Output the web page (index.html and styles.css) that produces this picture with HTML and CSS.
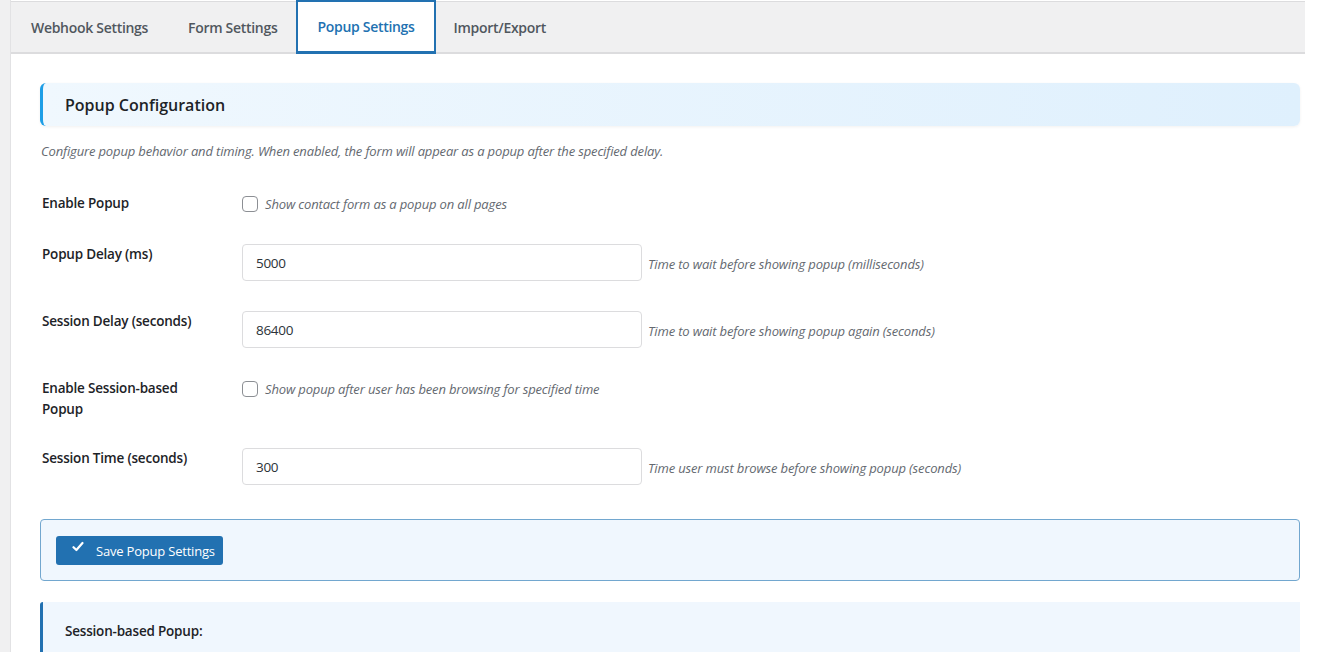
FILE: index.html
```html
<!DOCTYPE html>
<html lang="en">
<head>
<meta charset="utf-8">
<title>Popup Settings</title>
<link rel="stylesheet" href="styles.css">
</head>
<body>
<div class="page">
  <div class="edge"></div>
  <main class="main">
    <nav class="tabs">
      <a class="tab">Webhook Settings</a>
      <a class="tab">Form Settings</a>
      <a class="tab active">Popup Settings</a>
      <a class="tab">Import/Export</a>
    </nav>
    <div class="content">
      <div class="section-head">
        <h2>Popup Configuration</h2>
      </div>
      <p class="intro">Configure popup behavior and timing. When enabled, the form will appear as a popup after the specified delay.</p>

      <div class="rows">
        <div class="row">
          <label class="lbl">Enable Popup</label>
          <div class="ctl check-ctl">
            <span class="checkbox"></span>
            <span class="desc">Show contact form as a popup on all pages</span>
          </div>
        </div>
        <div class="row">
          <label class="lbl">Popup Delay (ms)</label>
          <div class="ctl">
            <input class="field" type="text" value="5000">
            <span class="desc after">Time to wait before showing popup (milliseconds)</span>
          </div>
        </div>
        <div class="row">
          <label class="lbl">Session Delay (seconds)</label>
          <div class="ctl">
            <input class="field" type="text" value="86400">
            <span class="desc after">Time to wait before showing popup again (seconds)</span>
          </div>
        </div>
        <div class="row tight">
          <label class="lbl wrap">Enable Session-based Popup</label>
          <div class="ctl check-ctl">
            <span class="checkbox"></span>
            <span class="desc">Show popup after user has been browsing for specified time</span>
          </div>
        </div>
        <div class="row">
          <label class="lbl">Session Time (seconds)</label>
          <div class="ctl">
            <input class="field" type="text" value="300">
            <span class="desc after">Time user must browse before showing popup (seconds)</span>
          </div>
        </div>
      </div>

      <div class="save-box">
        <button class="btn" type="button">
          <svg class="tick" width="12" height="12" viewBox="0 0 12 12" aria-hidden="true"><path d="M1.5 6.2 L4.4 9 L10.5 2" fill="none" stroke="#fff" stroke-width="2.2" stroke-linecap="round" stroke-linejoin="round"/></svg>
          <span>Save Popup Settings</span>
        </button>
      </div>

      <div class="info-panel">
        <h3>Session-based Popup:</h3>
      </div>
    </div>
  </main>
</div>
</body>
</html>
```
FILE: styles.css
```css
* { box-sizing: border-box; }
html, body { margin: 0; padding: 0; }
body {
  background: #fff;
  font-family: "Open Sans", "Noto Sans", sans-serif;
  color: #1d2327;
  height: 652px;
  overflow: hidden;
}
.page { display: flex; height: 652px; }
.edge {
  width: 11px;
  flex: none;
  background: #f0f0f1;
  border-right: 1px solid #e2e2e4;
}
.main {
  width: 1294px;
  flex: none;
  background: #fff;
}
.tabs {
  display: flex;
  align-items: stretch;
  height: 53px;
  margin-top: 1px;
  background: #f0f0f1;
  border-top: 1px solid #dcdcde;
  border-bottom: 2px solid #dcdcde;
}
.tab {
  display: flex;
  align-items: center;
  padding: 0 20px;
  font-size: 14px;
  font-weight: 600;
  color: #50575e;
  letter-spacing: -0.3px;
  text-decoration: none;
}
.tab.active {
  margin-top: -2px;
  margin-bottom: -2px;
  margin-left: -1px;
  margin-right: -2px;
  background: #fff;
  color: #2271b1;
  border: 2px solid #2271b1;
  border-bottom-width: 3px;
  padding: 0 19px;
}
.content { padding: 29px 5px 0 29px; }
.section-head {
  height: 43px;
  display: flex;
  align-items: center;
  padding-left: 22px;
  border-left: 3px solid #1e9ee6;
  border-radius: 6px;
  background: linear-gradient(90deg, #f0f8fe 0%, #dff0fd 100%);
  box-shadow: 0 1px 3px rgba(0, 0, 0, 0.06);
}
.section-head h2 {
  margin: 0;
  font-size: 16px;
  font-weight: 600;
  color: #1d2327;
  letter-spacing: 0;
}
.intro {
  margin: 16px 0 0 1px;
  font-size: 13px;
  font-style: italic;
  color: #646970;
  letter-spacing: -0.15px;
  line-height: 18px;
}
.rows {
  display: flex;
  flex-direction: column;
  gap: 30px;
  margin-top: 33px;
}
.row {
  display: grid;
  grid-template-columns: 200px 1fr;
  align-items: start;
  padding-left: 1px;
}
.row.tight { margin-bottom: -2px; }
.lbl {
  font-size: 13.5px;
  font-weight: 600;
  line-height: 21px;
  color: #1d2327;
  letter-spacing: -0.2px;
  padding-left: 1px;
}
.lbl.wrap { max-width: 150px; }
.ctl { display: flex; align-items: center; padding-left: 1px; }
.check-ctl { height: 21px; }
.checkbox {
  width: 16px;
  height: 16px;
  border: 1px solid #8c8f94;
  border-radius: 4px;
  background: #fff;
  margin-right: 7px;
  flex: none;
}
.desc {
  font-size: 13px;
  font-style: italic;
  color: #646970;
  letter-spacing: -0.15px;
}
.desc.after { margin-left: 6px; margin-top: 2px; }
.field {
  width: 400px;
  height: 37px;
  padding: 0 13px;
  border: 1px solid #dcdcde;
  border-radius: 4px;
  font-family: "Open Sans", "Noto Sans", sans-serif;
  font-size: 13.5px;
  color: #2c3338;
  letter-spacing: -0.3px;
  background: #fff;
}
.save-box {
  margin-top: 34px;
  height: 62px;
  padding: 16px 15px;
  border: 1px solid #72a7cf;
  border-radius: 4px;
  background: #f0f7fe;
}
.btn {
  display: flex;
  align-items: center;
  height: 29px;
  width: 167px;
  padding: 0 0 0 16px;
  border: none;
  border-radius: 3px;
  background: #2271b1;
  color: #fff;
  font-family: "Open Sans", "Noto Sans", sans-serif;
  font-size: 13px;
  letter-spacing: -0.2px;
}
.tick { margin-right: 12px; margin-top: -7px; }
.info-panel {
  margin-top: 21px;
  height: 80px;
  padding: 19px 0 0 22px;
  border-left: 3px solid #2271b1;
  border-radius: 3px 0 0 0;
  background: #f0f7fe;
}
.info-panel h3 {
  margin: 0;
  font-size: 13.5px;
  font-weight: 600;
  line-height: 21px;
  color: #1d2327;
  letter-spacing: -0.2px;
}
```
